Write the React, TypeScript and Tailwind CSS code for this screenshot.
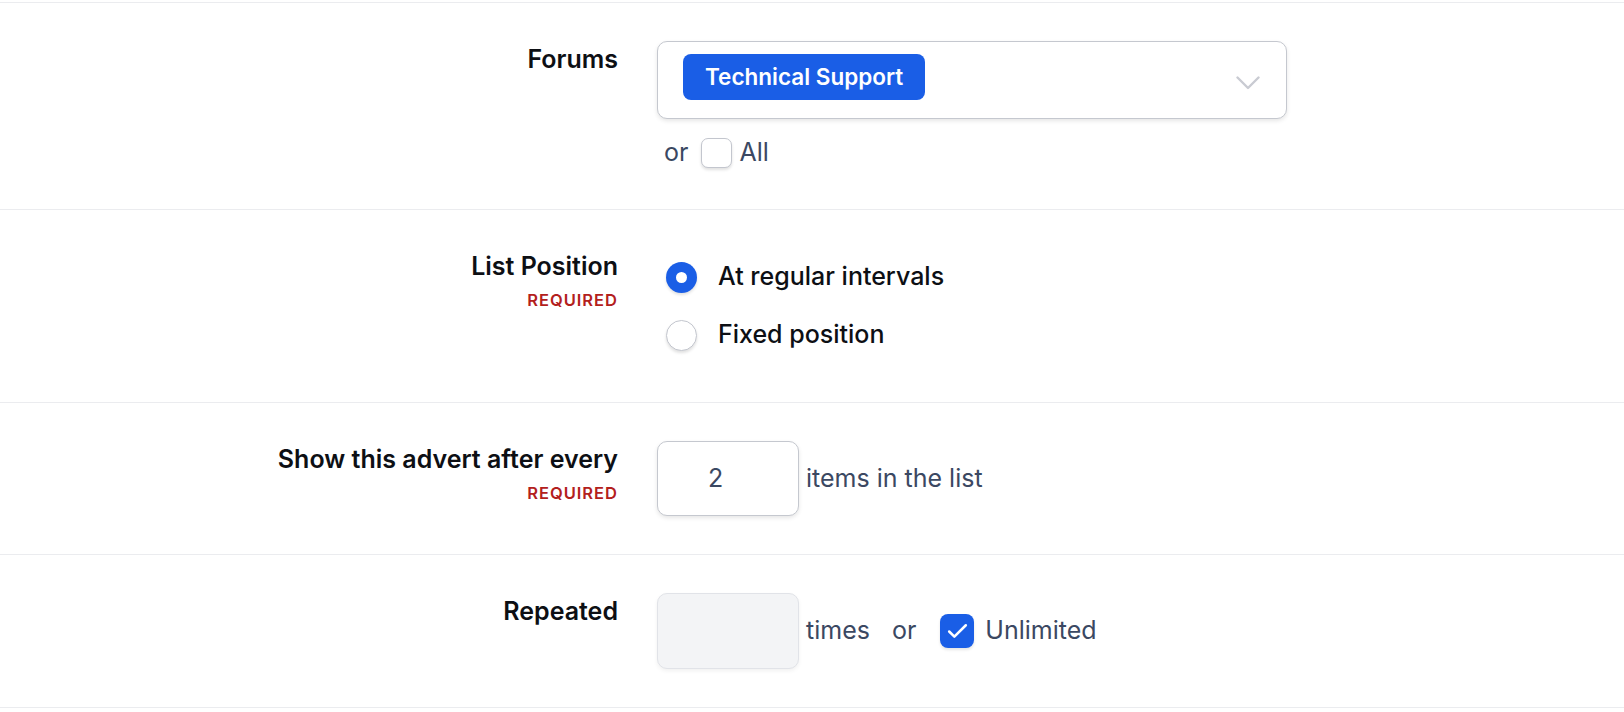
import { Check } from "lucide-react";

const fontStack = "font-['Inter','Noto_Sans',sans-serif]";

function Label({ text, required }: { text: string; required?: boolean }) {
  return (
    <div className="w-[618px] shrink-0 text-right">
      <div className="text-[25px] leading-[36px] font-semibold text-[#0d0f14]">{text}</div>
      {required && (
        <div className="text-[16.5px] leading-[32px] font-semibold tracking-[0.06em] text-[#b3201c]">
          REQUIRED
        </div>
      )}
    </div>
  );
}

function Row({ children, first }: { children: React.ReactNode; first?: boolean }) {
  return (
    <div
      className={`flex border-b border-[#ebecef] py-[38px] ${first ? "border-t" : ""}`}
    >
      {children}
    </div>
  );
}

function Radio({ checked, label }: { checked?: boolean; label: string }) {
  return (
    <div className="flex h-[58px] items-center">
      {checked ? (
        <span className="flex h-[31px] w-[31px] items-center justify-center rounded-full bg-[#1a5ee6] shadow-[0_2px_3px_rgba(0,0,0,0.12)]">
          <span className="h-[11px] w-[11px] rounded-full bg-white" />
        </span>
      ) : (
        <span className="h-[31px] w-[31px] rounded-full border border-[#c3c6ce] bg-white shadow-[0_2px_3px_rgba(0,0,0,0.12)]" />
      )}
      <span className="ml-[21px] text-[25px] font-medium text-[#0d0f14]">{label}</span>
    </div>
  );
}

export default function App() {
  return (
    <div className={`min-h-screen bg-white pt-[2px] ${fontStack}`}>
      <Row first>
        <Label text="Forums" />
        <div className="ml-[39px] flex flex-col">
          <div className="flex h-[78px] w-[630px] items-start justify-between rounded-[10px] border border-[#c5c8cf] bg-white pl-[25px] pr-[26px] pt-[12px] shadow-[0_2px_4px_rgba(0,0,0,0.1)]">
            <span className="flex h-[46px] items-center rounded-[8px] bg-[#1a5ee6] px-[22px] text-[22.5px] font-semibold text-white">
              Technical Support
            </span>
            <svg width="24" height="14" viewBox="0 0 24 14" className="mt-[22px]">
              <polyline
                points="1.5,1.5 12,12 22.5,1.5"
                fill="none"
                stroke="#c9cbd2"
                strokeWidth="2.4"
                strokeLinecap="round"
                strokeLinejoin="round"
              />
            </svg>
          </div>
          <div className="mt-[16px] flex h-[36px] items-center text-[25px] text-[#3b4862]">
            <span className="ml-[7px]">or</span>
            <span className="ml-[13px] h-[30px] w-[31px] rounded-[7px] border border-[#c3c6ce] bg-white shadow-[0_2px_3px_rgba(0,0,0,0.12)]" />
            <span className="ml-[7px]">All</span>
          </div>
        </div>
      </Row>

      <Row>
        <Label text="List Position" required />
        <div className="ml-[48px] flex flex-col">
          <Radio checked label="At regular intervals" />
          <Radio label="Fixed position" />
        </div>
      </Row>

      <Row>
        <Label text="Show this advert after every" required />
        <div className="ml-[39px] flex items-start">
          <div className="flex items-center">
            <div className="flex h-[75px] w-[142px] items-center rounded-[10px] border border-[#c5c8cf] bg-white pl-[50px] text-[25px] text-[#3b4862] shadow-[0_2px_4px_rgba(0,0,0,0.1)]">
              2
            </div>
            <span className="ml-[7px] text-[25px] text-[#3b4862]">items in the list</span>
          </div>
        </div>
      </Row>

      <Row>
        <Label text="Repeated" />
        <div className="ml-[39px] flex items-start">
          <div className="flex items-center text-[25px] text-[#3b4862]">
            <div className="h-[76px] w-[142px] rounded-[10px] border border-[#e1e3e8] bg-[#f3f4f6] shadow-[0_2px_4px_rgba(0,0,0,0.06)]" />
            <span className="ml-[7px]">times</span>
            <span className="ml-[22px]">or</span>
            <span className="ml-[24px] flex h-[34px] w-[34px] items-center justify-center rounded-[8px] bg-[#1a5ee6] shadow-[0_2px_3px_rgba(0,0,0,0.1)]">
              <Check size={25} strokeWidth={2.4} color="white" />
            </span>
            <span className="ml-[11px]">Unlimited</span>
          </div>
        </div>
      </Row>
    </div>
  );
}
